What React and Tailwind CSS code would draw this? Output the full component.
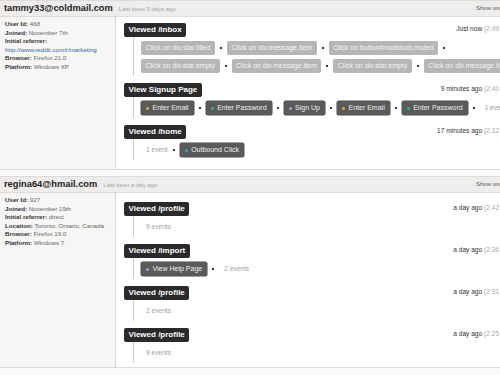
import React from "react";

const Sep = () => <span className="mx-[5px] inline-block h-[2px] w-[2px] bg-[#3a3a3a]" />;

const Light = ({ children }) => (
  <span className="inline-flex h-[14px] items-center whitespace-nowrap rounded-[2px] bg-[#b6b6b6] px-[4.5px] text-[7px] text-[#f5f5f5]">
    {children}
  </span>
);

const Dark = ({ dot, children }) => (
  <span className="inline-flex h-[14px] items-center whitespace-nowrap rounded-[2px] bg-[#5a5a5a] pl-[5px] pr-[5px] text-[7px] text-[#f0f0f0] shadow-[0_0_0_0.5px_#444]">
    <span className={"mr-[3.5px] inline-block h-[3px] w-[3px] rounded-full " + dot} />
    {children}
  </span>
);

const Count = ({ children }) => (
  <span className="inline-flex h-[14px] items-center whitespace-nowrap pl-[5px] text-[6.6px] text-[#a0a0a0]">{children}</span>
);

const Item = ({ children, sep = true }) => (
  <span className="inline-flex items-center">
    {children}
    {sep && <Sep />}
  </span>
);

const Group = ({ title, ago, time, children }) => (
  <div className="mb-[7px] last:mb-0">
    <div className="flex items-start justify-between">
      <span className="inline-flex h-[14px] items-center whitespace-nowrap rounded-[2px] bg-[#2a292b] px-[4.5px] text-[8px] font-bold text-white">
        {title}
      </span>
      <span className="mr-[19px] mt-[1px] whitespace-nowrap text-[6.6px] text-[#333]">
        {ago} <span className="text-[#aaa]">{time}</span>
      </span>
    </div>
    <div className="ml-[9px] flex flex-wrap gap-y-[4px] border-l border-[#cccccc] pb-[3px] pl-[7px] pt-[4px]">{children}</div>
  </div>
);

const Row = ({ label, children }) => (
  <div className="leading-[8.5px]">
    <span className="font-bold text-[#333]">{label}</span> <span className="text-[#666]">{children}</span>
  </div>
);

const Section = ({ email, seen, info, children, last, mainPad }) => (
  <div className={"border-y border-[#dddad7] bg-white " + (last ? "" : "mb-[6px]")}>
    <div className="flex h-[16px] items-center justify-between border-b border-[#dddad7] bg-[#efedeb] pl-[4px] pr-[16px]">
      <div className="flex items-baseline">
        <span className="text-[9.3px] font-bold text-[#222]">{email}</span>
        <span className="ml-[6px] text-[6px] text-[#a5a5a5]">{seen}</span>
      </div>
      <span className="text-[6px] text-[#555]">Show unclassified</span>
    </div>
    <div className="flex">
      <div className="w-[116px] shrink-0 border-r border-[#dddad7] bg-[#f7f6f4] px-[5px] pt-[3px] text-[6.2px]">{info}</div>
      <div className={"min-w-0 flex-1 pl-[8px] pr-[8px] " + mainPad}>{children}</div>
    </div>
  </div>
);

export default function App() {
  return (
    <div className="h-[375px] w-[500px] overflow-hidden bg-[#fafafa] font-['Liberation_Sans',Arial,sans-serif]">
      <div className="w-[540px]">
        <Section
          mainPad="pt-[6px] pb-[9px]"
          email="tammy33@coldmail.com"
          seen="Last seen 5 days ago"
          info={
            <>
              <Row label="User Id:">468</Row>
              <Row label="Joined:">November 7th</Row>
              <Row label="Initial referrer:"></Row>
              <div className="leading-[8.5px] text-[#2f6a9e]">http://www.reddit.com/r/marketing</div>
              <Row label="Browser:">Firefox 21.0</Row>
              <Row label="Platform:">Windows XP</Row>
            </>
          }
        >
          <Group title="Viewed /inbox" ago="Just now" time="(2:49 PM)">
            <Item><Light>Click on div.star.filled</Light></Item>
            <Item><Light>Click on div.message.item</Light></Item>
            <Item><Light>Click on button#nodisturb.muted</Light></Item>
            <Item><Light>Click on div.star.empty</Light></Item>
            <Item><Light>Click on div.message.item</Light></Item>
            <Item><Light>Click on div.star.empty</Light></Item>
            <Item><Light>Click on div.message.item</Light></Item>
          </Group>
          <Group title="View Signup Page" ago="9 minutes ago" time="(2:40 PM)">
            <Item><Dark dot="bg-[#f5a623]">Enter Email</Dark></Item>
            <Item><Dark dot="bg-[#2fbf71]">Enter Password</Dark></Item>
            <Item><Dark dot="bg-[#b692f0]">Sign Up</Dark></Item>
            <Item><Dark dot="bg-[#f5a623]">Enter Email</Dark></Item>
            <Item><Dark dot="bg-[#2fbf71]">Enter Password</Dark></Item>
            <Item sep={false}><Count>1 event</Count></Item>
          </Group>
          <Group title="Viewed /home" ago="17 minutes ago" time="(2:32 PM)">
            <Item><Count>1 event</Count></Item>
            <Item sep={false}><Dark dot="bg-[#2aa9e6]">Outbound Click</Dark></Item>
          </Group>
        </Section>
        <Section
          last
          mainPad="pt-[9px] pb-[4px]"
          email="regina64@hmail.com"
          seen="Last seen a day ago"
          info={
            <>
              <Row label="User Id:">927</Row>
              <Row label="Joined:">November 19th</Row>
              <Row label="Initial referrer:">direct</Row>
              <Row label="Location:">Toronto, Ontario, Canada</Row>
              <Row label="Browser:">Firefox 19.0</Row>
              <Row label="Platform:">Windows 7</Row>
            </>
          }
        >
          <Group title="Viewed /profile" ago="a day ago" time="(2:42 PM)">
            <Item sep={false}><Count>9 events</Count></Item>
          </Group>
          <Group title="Viewed /import" ago="a day ago" time="(2:36 PM)">
            <Item><Dark dot="bg-[#b692f0]">View Help Page</Dark></Item>
            <Item sep={false}><Count>2 events</Count></Item>
          </Group>
          <Group title="Viewed /profile" ago="a day ago" time="(2:31 PM)">
            <Item sep={false}><Count>2 events</Count></Item>
          </Group>
          <Group title="Viewed /profile" ago="a day ago" time="(2:25 PM)">
            <Item sep={false}><Count>9 events</Count></Item>
          </Group>
        </Section>
      </div>
    </div>
  );
}
